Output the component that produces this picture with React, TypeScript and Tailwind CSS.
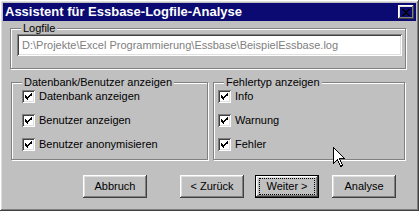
const raised =
	"shadow-[inset_-1px_-1px_0_#404040,inset_1px_1px_0_#ffffff,inset_-2px_-2px_0_#808080,inset_2px_2px_0_#dfdfdf]";
const sunken =
	"shadow-[inset_1px_1px_0_#808080,inset_-1px_-1px_0_#ffffff,inset_2px_2px_0_#404040,inset_-2px_-2px_0_#dfdfdf]";

function Check({ label }: { label: string }) {
	return (
		<div className="flex items-center h-[13px]">
			<span className={`w-[13px] h-[13px] bg-white ${sunken} flex items-center justify-center shrink-0`}>
				<svg width="7" height="7" viewBox="0 0 7 7" shapeRendering="crispEdges">
					<path
						d="M6 0h1v3h-1zM5 1h1v1h-1zM5 2h1v1h-1zM4 2h1v2h-1zM3 3h1v2h-1zM2 4h1v3h-1zM1 3h1v3h-1zM0 2h1v3h-1z"
						fill="#000"
					/>
				</svg>
			</span>
			<span className="ml-[4px] leading-[13px]">{label}</span>
		</div>
	);
}

function Group({
	label,
	className,
	children,
}: {
	label: string;
	className: string;
	children: React.ReactNode;
}) {
	return (
		<fieldset
			className={`border border-[#808080] shadow-[1px_1px_0_#ffffff,inset_1px_1px_0_#ffffff] ${className}`}
		>
			<legend className="ml-[10px] px-[2px] leading-[12px] bg-[#c0c0c0]">{label}</legend>
			{children}
		</fieldset>
	);
}

function Button({ label, def }: { label: string; def?: boolean }) {
	if (def) {
		return (
			<div className="w-[64px] h-[23px] border border-black">
				<div className={`w-full h-full ${raised} flex items-center justify-center`}>
					<span className="border border-dotted border-black px-[6px] leading-[13px] py-[1px]">{label}</span>
				</div>
			</div>
		);
	}
	return (
		<div className={`w-[64px] h-[23px] ${raised} flex items-center justify-center`}>
			<span className="leading-[13px]">{label}</span>
		</div>
	);
}

export default function App() {
	return (
		<div
			className={`relative w-[419px] h-[211px] bg-[#c0c0c0] ${raised} p-[3px] text-[11px] text-black overflow-hidden`}
			style={{ fontFamily: '"Liberation Sans", Arial, sans-serif' }}
		>
			<div className="h-[18px] bg-[#0a0a72] flex items-center justify-between pl-[2px] pr-[2px]">
				<span className="text-white font-bold text-[13px] leading-[18px]">
					Assistent für Essbase-Logfile-Analyse
				</span>
				<div className={`w-[16px] h-[14px] ${raised} flex items-center justify-center`}>
					<svg width="8" height="7" viewBox="0 0 8 7" shapeRendering="crispEdges">
						<path
							d="M0 0h2v1h-2zM6 0h2v1h-2zM1 1h2v1h-2zM5 1h2v1h-2zM2 2h4v1h-4zM3 3h2v1h-2zM2 4h4v1h-4zM1 5h2v1h-2zM5 5h2v1h-2zM0 6h2v1h-2zM6 6h2v1h-2z"
							fill="#000"
						/>
					</svg>
				</div>
			</div>

			<div className="pl-[7px]">
				<Group label="Logfile" className="mt-[1px] w-[396px] h-[47px]">
					<div
						className={`ml-[6px] w-[385px] h-[22px] bg-white ${sunken} flex items-center pl-[5px] text-[#808080]`}
					>
						D:\Projekte\Excel Programmierung\Essbase\BeispielEssbase.log
					</div>
				</Group>

				<div className="flex mt-[7px]">
					<Group label="Datenbank/Benutzer anzeigen" className="ml-[1px] w-[197px] h-[84px]">
						<div className="pl-[10px] pt-[2px] flex flex-col gap-[11px]">
							<Check label="Datenbank anzeigen" />
							<Check label="Benutzer anzeigen" />
							<Check label="Benutzer anonymisieren" />
						</div>
					</Group>
					<Group label="Fehlertyp anzeigen" className="ml-[5px] w-[192px] h-[84px]">
						<div className="pl-[4px] pt-[2px] flex flex-col gap-[11px]">
							<Check label="Info" />
							<Check label="Warnung" />
							<Check label="Fehler" />
						</div>
					</Group>
				</div>

				<div className="flex mt-[15px] pl-[73px]">
					<Button label="Abbruch" />
					<div className="ml-[33px]">
						<Button label="< Zurück" />
					</div>
					<div className="ml-[11px]">
						<Button label="Weiter >" def />
					</div>
					<div className="ml-[13px]">
						<Button label="Analyse" />
					</div>
				</div>
			</div>

			<svg
				className="absolute left-[333px] top-[147px]"
				width="12"
				height="20"
				viewBox="0 0 12 20"
				shapeRendering="crispEdges"
			>
				<path
					d="M0.5 0.5 L0.5 16.5 L4.5 12.5 L7.5 19.5 L9.5 18.5 L6.5 11.5 L11.5 11.5 Z"
					fill="#fff"
					stroke="#000"
					strokeWidth="1"
				/>
			</svg>
		</div>
	);
}
